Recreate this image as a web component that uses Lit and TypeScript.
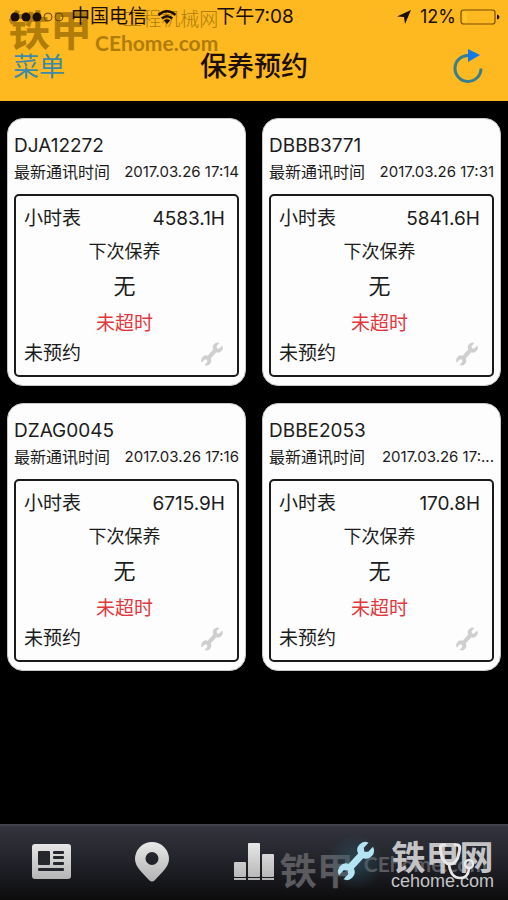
import { LitElement, html, css, svg } from "lit";
import { customElement, property } from "lit/decorators.js";

interface Machine {
  id: string;
  time: string;
  hours: string;
}

const machines: Machine[] = [
  { id: "DJA12272", time: "2017.03.26 17:14", hours: "4583.1H" },
  { id: "DBBB3771", time: "2017.03.26 17:31", hours: "5841.6H" },
  { id: "DZAG0045", time: "2017.03.26 17:16", hours: "6715.9H" },
  { id: "DBBE2053", time: "2017.03.26 17:...", hours: "170.8H" },
];

// Double open-ended wrench, drawn upright around the origin and then tilted.
const wrench = svg`<path transform="translate(20 20) rotate(42)" d="M-3-22V-15L0-12.500L3-15V-22A8 8 0 0 1 3.500-7V7A8 8 0 0 1 3 22V15L0 12.500L-3 15V22A8 8 0 0 1-3.500 7V-7A8 8 0 0 1-3-22Z"/>`;

@customElement("machine-card")
export class MachineCard extends LitElement {
  @property({ attribute: false }) machine!: Machine;

  static styles = css`
    :host {
      display: block;
      min-width: 0;
    }
    .card {
      box-sizing: border-box;
      background: #fdfdfd;
      border: 1px solid #c8c8c8;
      border-radius: 16px;
      padding: 15px 6px 8px;
      color: #1c1c1c;
    }
    .id {
      margin: 0;
      font-size: 19px;
      font-weight: 400;
      line-height: 24px;
    }
    .row {
      display: flex;
      justify-content: space-between;
      align-items: center;
      white-space: nowrap;
    }
    .comm {
      margin: 4px 0 12px;
      font-size: 16px;
      line-height: 20px;
    }
    .time {
      font-size: 15px;
    }
    .box {
      border: 2px solid #1a1a1a;
      border-radius: 5px;
      padding: 11px 12px 9px 8px;
      font-size: 19px;
      line-height: 24px;
      text-align: center;
    }
    .box p {
      margin: 0;
    }
    .box .next {
      margin-top: 9px;
      font-size: 18px;
    }
    .box .none {
      margin-top: 8px;
      font-size: 22px;
      line-height: 28px;
    }
    .box .late {
      margin: 12px 0 6px;
      color: #e0383e;
    }
    .wrench {
      width: 26px;
      height: 24px;
      fill: #cfcfcf;
    }
  `;

  render() {
    const m = this.machine;
    return html`
      <article class="card">
        <h2 class="id">${m.id}</h2>
        <div class="row comm"><span>最新通讯时间</span><span class="time">${m.time}</span></div>
        <div class="box">
          <div class="row"><span>小时表</span><span>${m.hours}</span></div>
          <p class="next">下次保养</p>
          <p class="none">无</p>
          <p class="late">未超时</p>
          <div class="row">
            <span>未预约</span>
            <svg class="wrench" viewBox="0 0 40 40" aria-hidden="true">${wrench}</svg>
          </div>
        </div>
      </article>
    `;
  }
}

@customElement("app-root")
export class AppRoot extends LitElement {
  static styles = css`
    :host {
      display: flex;
      flex-direction: column;
      min-height: 100vh;
      background: #000;
      font-family: Inter, "Noto Sans CJK SC", sans-serif;
    }
    button {
      background: none;
      border: 0;
      padding: 0;
      font: inherit;
      cursor: pointer;
    }
    .top {
      position: relative;
      background: #fdb91f;
      color: #1c0e02;
    }
    .status,
    .bar {
      position: relative;
      display: grid;
      grid-template-columns: 1fr auto 1fr;
      align-items: center;
    }
    .status {
      height: 33px;
      padding: 0 8px 0 10px;
      font-size: 18px;
      line-height: 24px;
    }
    .group {
      display: flex;
      align-items: center;
      gap: 7px;
    }
    .end {
      justify-content: flex-end;
      gap: 4px;
    }
    .carrier,
    .clock {
      font-size: 19px;
    }
    .dots {
      width: 54px;
      height: 12px;
    }
    .wifi {
      width: 20px;
      height: 16px;
      margin-left: 3px;
    }
    .arrow {
      width: 16px;
      height: 16px;
      margin-right: 4px;
    }
    .battery {
      width: 40px;
      height: 16px;
    }
    .bar {
      height: 68px;
      padding: 0 13px;
    }
    .title {
      margin: 0;
      font-size: 27px;
      font-weight: 500;
      line-height: 36px;
    }
    .menu {
      justify-self: start;
      font-size: 26px;
      line-height: 36px;
      color: #3a8aa8;
    }
    .refresh {
      justify-self: end;
      height: 36px;
      margin-right: 12px;
    }
    .refresh svg {
      display: block;
      width: 30px;
      height: 36px;
    }
    .mark {
      position: absolute;
      pointer-events: none;
      white-space: nowrap;
      line-height: 1;
    }
    .mark-top {
      left: 8px;
      top: 10px;
      color: #b07c0a;
    }
    .mark-foot {
      right: 21px;
      top: 29px;
      color: #5a5a5f;
    }
    .logo {
      display: grid;
      grid-template-columns: auto auto;
      align-items: start;
      gap: 3px;
    }
    .big {
      grid-row: 1 / span 2;
      font-size: 42px;
      font-weight: 700;
    }
    .small {
      justify-self: end;
      font-size: 19px;
      font-weight: 300;
    }
    .latin {
      font-family: Lato, "Liberation Sans", sans-serif;
      font-size: 21px;
      font-weight: 700;
    }
    .mark-foot .big {
      font-size: 37px;
    }
    .mark-foot.logo {
      align-items: center;
      column-gap: 10px;
    }
    .mark-bright {
      right: 14px;
      top: 20px;
      display: grid;
      color: #c4c4c7;
      font-family: "Liberation Sans", "Noto Sans CJK SC", sans-serif;
      font-size: 18px;
      text-align: center;
    }
    .mark-bright .cn {
      font-size: 34px;
      line-height: 28px;
      font-weight: 700;
    }
    .mark-bright .en {
      line-height: 18px;
    }
    .cards {
      flex: 1;
      display: grid;
      grid-template-columns: 1fr 1fr;
      align-content: start;
      gap: 17px 16px;
      padding: 17px 7px;
    }
    .tabs {
      position: relative;
      display: grid;
      grid-template-columns: repeat(5, 1fr);
      height: 76px;
      background: linear-gradient(#464750, #32333c 3px, #22232a 50%, #0c0c0d);
    }
    .tab {
      position: relative;
      display: flex;
      align-items: center;
      justify-content: center;
    }
    .tab svg {
      width: 44px;
      height: 44px;
    }
    .active {
      background: radial-gradient(circle, #2d5e7088, #2d5e7000 45%);
    }
  `;

  render() {
    return html`
      <header class="top">
        <div class="mark mark-top logo" aria-hidden="true">
          <span class="big">铁甲</span>
          <span class="small">工程机械网</span>
          <span class="latin">CEhome.com</span>
        </div>
        <div class="status">
          <div class="group">
            <svg class="dots" viewBox="0 0 54 12" fill="#1c0e02" aria-hidden="true">
              <circle cx="5" cy="6" r="4.500" /><circle cx="16" cy="6" r="4.500" /><circle cx="27" cy="6" r="4.500" />
              <g fill="none" stroke="#6b4806"><circle cx="38" cy="6" r="4" /><circle cx="49" cy="6" r="4" /></g>
            </svg>
            <span class="carrier">中国电信</span>
            <svg class="wifi" viewBox="0 0 20 16" fill="none" stroke="#1c0e02" stroke-width="2.600" aria-hidden="true">
              <path d="M1.500 6Q10-1.500 18.500 6M4.800 9.500Q10 5 15.200 9.500" />
              <path d="M6.800 11.500Q10 9 13.200 11.500L10 15Z" fill="#1c0e02" stroke="none" />
            </svg>
          </div>
          <span class="clock">下午7:08</span>
          <div class="group end">
            <svg class="arrow" viewBox="0 0 16 16" fill="#1c0e02" aria-hidden="true"><path d="M15 1L9 15L8 8L1 7.500Z" /></svg>
            <span>12%</span>
            <svg class="battery" viewBox="0 0 40 16" aria-hidden="true">
              <rect x="1" y="1" width="34" height="14" rx="2.500" fill="none" stroke="#7a4b08" stroke-width="1.200" />
              <rect x="3" y="3" width="4" height="10" fill="#ffc52c" />
              <path d="M37 5.500Q39.500 6 39.500 8T37 10.500Z" fill="#1c0e02" />
            </svg>
          </div>
        </div>
        <div class="bar">
          <button class="menu">菜单</button>
          <h1 class="title">保养预约</h1>
          <button class="refresh" aria-label="刷新">
            <svg viewBox="0 0 30 36" aria-hidden="true">
              <path d="M16 6.500A13 13 0 1 0 28 19.500" fill="none" stroke="#347f92" stroke-width="3" />
              <path d="M15 0L27 6L15 13Z" fill="#1479e8" />
            </svg>
          </button>
        </div>
      </header>

      <main class="cards">
        ${machines.map((m) => html`<machine-card .machine=${m}></machine-card>`)}
      </main>

      <nav class="tabs">
        <div class="mark mark-foot logo" aria-hidden="true">
          <span class="big">铁甲</span>
          <span class="latin">CEhome.com</span>
        </div>
        <div class="mark mark-bright" aria-hidden="true">
          <span class="cn">铁甲网</span>
          <span class="en">cehome.com</span>
        </div>
        <button class="tab" aria-label="信息">
          <svg viewBox="0 0 44 44" aria-hidden="true">
            <defs>
              <linearGradient id="metal" gradientUnits="userSpaceOnUse" x1="0" y1="4" x2="0" y2="40">
                <stop offset="0" stop-color="#e6e6e6" /><stop offset="1" stop-color="#b4b4b4" />
              </linearGradient>
            </defs>
            <rect x="3" y="4" width="39" height="35" rx="3" fill="url(#metal)" />
            <g fill="#26272c">
              <rect x="9" y="11" width="12" height="14" rx="1" />
              <rect x="24" y="11" width="11" height="3" rx="1" />
              <rect x="24" y="16" width="11" height="3" rx="1" />
              <rect x="24" y="22" width="11" height="3" rx="1" />
              <rect x="9" y="28" width="26" height="3" rx="1" />
            </g>
          </svg>
        </button>
        <button class="tab" aria-label="位置">
          <svg viewBox="0 0 44 44" aria-hidden="true">
            <path fill="url(#metal)" fill-rule="evenodd" d="M22 2A17 17 0 0 1 39 19C39 27 32 32 25 40Q22 43 19 40C12 32 5 27 5 19A17 17 0 0 1 22 2ZM22 12A6.500 6.500 0 1 0 22 25A6.500 6.500 0 1 0 22 12Z" />
          </svg>
        </button>
        <button class="tab" aria-label="统计">
          <svg viewBox="0 0 44 44" aria-hidden="true">
            <g fill="url(#metal)">
              <rect x="2" y="22" width="12" height="15" rx="1" />
              <rect x="16" y="3" width="12" height="34" rx="1" />
              <rect x="30" y="14" width="12" height="23" rx="1" />
              <path d="M2 38h12v2H2zM16 38h12v2H16zM30 38h12v2H30z" />
            </g>
          </svg>
        </button>
        <button class="tab active" aria-label="保养">
          <svg viewBox="-2 -1 44 44" fill="#b4e3f3" aria-hidden="true">${wrench}</svg>
        </button>
        <button class="tab" aria-label="诊断">
          <svg viewBox="0 0 44 44" fill="none" stroke="#e8e8e8" stroke-width="3" stroke-linecap="round" aria-hidden="true">
            <path d="M10 5C4 4 5 9 6 13Q8 24 15 24T24 13C25 9 26 4 20 5" />
            <path d="M14 25Q16 38 25 38Q33 38 34 29" stroke-width="2.500" />
            <circle cx="34" cy="24" r="4" stroke-width="2.500" />
          </svg>
        </button>
      </nav>
    `;
  }
}
